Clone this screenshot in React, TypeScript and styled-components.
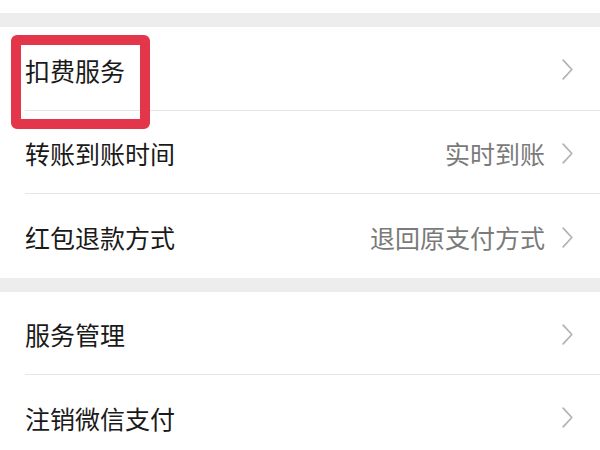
import * as React from 'react';
import styled, { createGlobalStyle } from 'styled-components';

const GlobalStyle = createGlobalStyle`
  html, body {
    margin: 0;
    padding: 0;
    background: #ededed;
    font-family: "Noto Sans CJK SC", "Noto Sans", sans-serif;
  }
`;

const Page = styled.div`
  width: 600px;
  height: 450px;
  overflow: hidden;
  background: #ededed;
  display: flex;
  flex-direction: column;
  gap: 14px;
`;

const TopStrip = styled.div`
  height: 13px;
  flex-shrink: 0;
  background: #ffffff;
`;

const Section = styled.div`
  background: #ffffff;
  display: flex;
  flex-direction: column;
  flex-shrink: 0;
`;

const Row = styled.div`
  position: relative;
  height: 83.5px;
  padding-left: 25px;
  box-sizing: border-box;
  display: flex;
`;

const RowInner = styled.div<{ $last?: boolean }>`
  flex: 1;
  display: flex;
  align-items: center;
  padding-right: 27px;
  padding-top: 3px;
  border-bottom: ${p => (p.$last ? 'none' : '1px solid #e6e6e6')};
`;

const Label = styled.span`
  flex: 1;
  font-size: 25px;
  color: #1a1a1a;
`;

const Value = styled.span`
  font-size: 25px;
  color: #7a7a7a;
  margin-right: 17px;
`;

const Highlight = styled.div`
  position: absolute;
  left: 11px;
  top: 8px;
  width: 139px;
  height: 94px;
  box-sizing: border-box;
  border: 10px solid #e4364a;
  border-radius: 6px;
  pointer-events: none;
`;

const Chevron = () => (
  <svg width="11" height="21" viewBox="0 0 11 21" fill="none">
    <polyline
      points="1.2,1.2 9.8,10.5 1.2,19.8"
      stroke="#b4b4b4"
      strokeWidth="1.8"
      strokeLinecap="round"
      strokeLinejoin="round"
    />
  </svg>
);

type Item = { label: string; value?: string; highlight?: boolean };

const groups: Item[][] = [
  [
    { label: '扣费服务', highlight: true },
    { label: '转账到账时间', value: '实时到账' },
    { label: '红包退款方式', value: '退回原支付方式' },
  ],
  [{ label: '服务管理' }, { label: '注销微信支付' }],
];

export default function App() {
  return (
    <>
      <GlobalStyle />
      <Page>
        <TopStrip />
        {groups.map((items, gi) => (
          <Section key={gi}>
            {items.map((item, i) => (
              <Row key={item.label}>
                <RowInner $last={gi === 0 && i === items.length - 1}>
                  <Label>{item.label}</Label>
                  {item.value && <Value>{item.value}</Value>}
                  <Chevron />
                </RowInner>
                {item.highlight && <Highlight />}
              </Row>
            ))}
          </Section>
        ))}
      </Page>
    </>
  );
}
